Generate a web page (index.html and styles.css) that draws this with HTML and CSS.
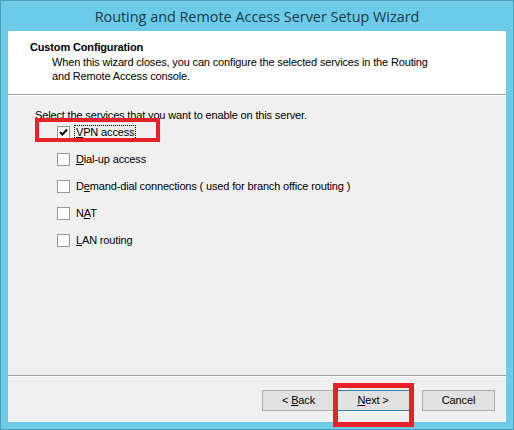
FILE: index.html
```html
<!DOCTYPE html>
<html>
<head>
<meta charset="utf-8">
<link rel="stylesheet" href="styles.css">
</head>
<body>
<div class="window">
  <div class="titlebar">Routing and Remote Access Server Setup Wizard</div>
  <div class="client">
    <div class="header">
      <div class="h-title">Custom Configuration</div>
      <div class="h-desc">When this wizard closes, you can configure the selected services in the Routing<br>and Remote Access console.</div>
    </div>
    <div class="body">
      <div class="prompt">Select the services that you want to enable on this server.</div>
      <div class="options">
        <div class="opt highlight">
          <span class="cb checked"><svg width="9" height="9" viewBox="0 0 9 9"><path d="M1 4 L3.5 6.5 L8 1.5" fill="none" stroke="#000" stroke-width="2"/></svg></span>
          <span class="lbl focus"><u>V</u>PN access</span>
        </div>
        <div class="opt"><span class="cb"></span><span class="lbl"><u>D</u>ial-up access</span></div>
        <div class="opt"><span class="cb"></span><span class="lbl">D<u>e</u>mand-dial connections ( used for branch office routing )</span></div>
        <div class="opt"><span class="cb"></span><span class="lbl">N<u>A</u>T</span></div>
        <div class="opt"><span class="cb"></span><span class="lbl"><u>L</u>AN routing</span></div>
      </div>
    </div>
    <div class="footer">
      <div class="btn">&lt; <u>B</u>ack</div>
      <div class="btn next"><u>N</u>ext &gt;</div>
      <div class="btn cancel">Cancel</div>
    </div>
  </div>
</div>
</body>
</html>
```
FILE: styles.css
```css
html, body {
  margin: 0;
  padding: 0;
}
body {
  width: 514px;
  height: 430px;
  overflow: hidden;
  font-family: "Liberation Sans", Arial, sans-serif;
  font-size: 11px;
  letter-spacing: -0.15px;
  color: #000;
}
.window {
  box-sizing: border-box;
  width: 514px;
  height: 430px;
  background: #6bcbe8;
  border: 1px solid #4a9dbb;
  padding: 0 7px 7px 7px;
  display: flex;
  flex-direction: column;
}
.titlebar {
  height: 30px;
  flex: none;
  text-align: center;
  font-family: "Open Sans", "Noto Sans", sans-serif;
  font-size: 14.4px;
  letter-spacing: 0;
  line-height: 31px;
  color: #1b3a48;
}
.client {
  flex: 1;
  background: #f0f0f0;
  display: flex;
  flex-direction: column;
}
.header {
  height: 64px;
  flex: none;
  background: #fff;
  border-bottom: 1px solid #a0a0a0;
  box-shadow: 0 1px 0 #fff;
  box-sizing: border-box;
  padding: 9px 0 0 22px;
}
.h-title {
  font-weight: bold;
  line-height: 14px;
}
.h-desc {
  padding-left: 22px;
  line-height: 14px;
  margin-top: 1px;
}
.body {
  flex: 1;
  padding: 13px 0 0 27px;
}
.prompt {
  line-height: 14px;
}
.options {
  display: flex;
  flex-direction: column;
  gap: 14px;
  padding-left: 22px;
  margin-top: 4px;
}
.opt {
  display: flex;
  align-items: center;
  height: 13px;
  position: relative;
}
.opt.highlight::before {
  content: "";
  position: absolute;
  left: -22px;
  top: -8px;
  width: 117px;
  height: 16px;
  border: 4px solid #e8212b;
}
.cb {
  box-sizing: border-box;
  width: 13px;
  height: 13px;
  border: 1px solid #979797;
  background: #fff;
  display: flex;
  align-items: center;
  justify-content: center;
  flex: none;
}
.lbl {
  margin-left: 5px;
  line-height: 13px;
  padding: 0 1px;
}
.lbl.focus {
  outline: 1px dotted #000;
}
.footer {
  height: 47px;
  flex: none;
  border-top: 1px solid #a0a0a0;
  box-shadow: inset 0 1px 0 #fff;
  box-sizing: border-box;
  display: flex;
  align-items: flex-start;
  padding: 14px 0 0 254px;
}
.btn {
  box-sizing: border-box;
  width: 73px;
  height: 21px;
  border: 1px solid #adadad;
  background: #e1e1e1;
  text-align: center;
  line-height: 19px;
}
.btn.next {
  margin-left: 1px;
  border-color: #3c7fb1;
  width: 74px;
  position: relative;
}
.btn.next::after {
  content: "";
  position: absolute;
  left: -4px;
  top: -8px;
  width: 71px;
  height: 34px;
  border: 5px solid #e8212b;
}
.btn.cancel {
  margin-left: 12px;
}
```
